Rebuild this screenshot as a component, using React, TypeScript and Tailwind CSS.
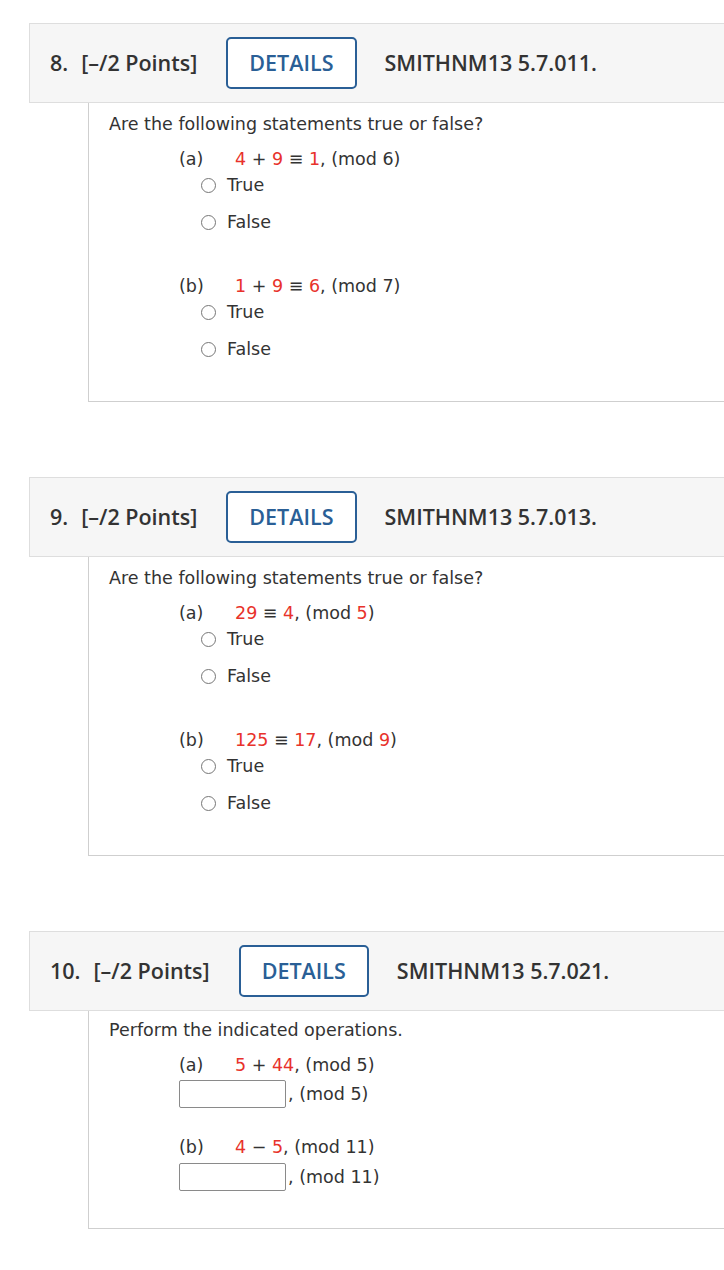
import React from "react";

const red = "text-[#e8322b]";

const Header = ({ num, code }: { num: string; code: string }) => (
  <div className="ml-[29px] h-[80px] bg-[#f6f6f6] border border-r-0 border-[#dedede] flex items-center pl-[20px] font-['Open_Sans',sans-serif] font-semibold text-[21.5px] text-[#333] whitespace-nowrap">
    <span>{num}</span>
    <span className="ml-[13px]">[–/2 Points]</span>
    <button className="ml-[29px] h-[52px] px-[21px] border-2 border-[#2a5f96] rounded-[5px] text-[#2a5f96] bg-white">
      DETAILS
    </button>
    <span className="ml-[28px]">{code}</span>
  </div>
);

const Radio = ({ label, className = "" }: { label: string; className?: string }) => (
  <div className={`flex items-center h-[24px] pl-[112px] ${className}`}>
    <span className="w-[15px] h-[15px] rounded-full border border-[#767676] bg-white" />
    <span className="ml-[11px]">{label}</span>
  </div>
);

const Part = ({ tag, children, className = "" }: { tag: string; children: React.ReactNode; className?: string }) => (
  <div className={`flex h-[24px] items-center pl-[90px] ${className}`}>
    <span className="w-[56px]">{tag}</span>
    <span>{children}</span>
  </div>
);

const TFQuestion = ({
  num,
  code,
  a,
  b,
}: {
  num: string;
  code: string;
  a: React.ReactNode;
  b: React.ReactNode;
}) => (
  <div>
    <Header num={num} code={code} />
    <div className="ml-[88px] border-l border-b border-[#cfcfcf] pt-[9px] pb-[40px]">
      <div className="h-[24px] flex items-center pl-[20px]">Are the following statements true or false?</div>
      <Part tag="(a)" className="mt-[11px]">{a}</Part>
      <Radio label="True" className="mt-[2px]" />
      <Radio label="False" className="mt-[13px]" />
      <Part tag="(b)" className="mt-[40px]">{b}</Part>
      <Radio label="True" className="mt-[2px]" />
      <Radio label="False" className="mt-[13px]" />
    </div>
  </div>
);

const InputRow = ({ mod, className = "" }: { mod: string; className?: string }) => (
  <div className={`flex items-center h-[28px] pl-[90px] ${className}`}>
    <div className="w-[107px] h-[28px] border border-[#8a8a8a] rounded-[2px] bg-white" />
    <span className="ml-[2px]">, (mod {mod})</span>
  </div>
);

export default function App() {
  return (
    <div className="w-[724px] min-h-[1270px] bg-white overflow-hidden font-['DejaVu_Sans',Verdana,sans-serif] text-[17.5px] text-[#333] pt-[23px]">
      <TFQuestion
        num="8."
        code="SMITHNM13 5.7.011."
        a={
          <>
            <span className={red}>4</span> + <span className={red}>9</span> ≡ <span className={red}>1</span>, (mod 6)
          </>
        }
        b={
          <>
            <span className={red}>1</span> + <span className={red}>9</span> ≡ <span className={red}>6</span>, (mod 7)
          </>
        }
      />
      <div className="h-[75px]" />
      <TFQuestion
        num="9."
        code="SMITHNM13 5.7.013."
        a={
          <>
            <span className={red}>29</span> ≡ <span className={red}>4</span>, (mod <span className={red}>5</span>)
          </>
        }
        b={
          <>
            <span className={red}>125</span> ≡ <span className={red}>17</span>, (mod <span className={red}>9</span>)
          </>
        }
      />
      <div className="h-[75px]" />
      <div>
        <Header num="10." code="SMITHNM13 5.7.021." />
        <div className="ml-[88px] border-l border-b border-[#cfcfcf] pt-[7px] pb-[37px]">
          <div className="h-[24px] flex items-center pl-[20px]">Perform the indicated operations.</div>
          <Part tag="(a)" className="mt-[11px]">
            <span className={red}>5</span> + <span className={red}>44</span>, (mod 5)
          </Part>
          <InputRow mod="5" className="mt-[3px]" />
          <Part tag="(b)" className="mt-[27px]">
            <span className={red}>4</span> − <span className={red}>5</span>, (mod 11)
          </Part>
          <InputRow mod="11" className="mt-[4px]" />
        </div>
      </div>
    </div>
  );
}
